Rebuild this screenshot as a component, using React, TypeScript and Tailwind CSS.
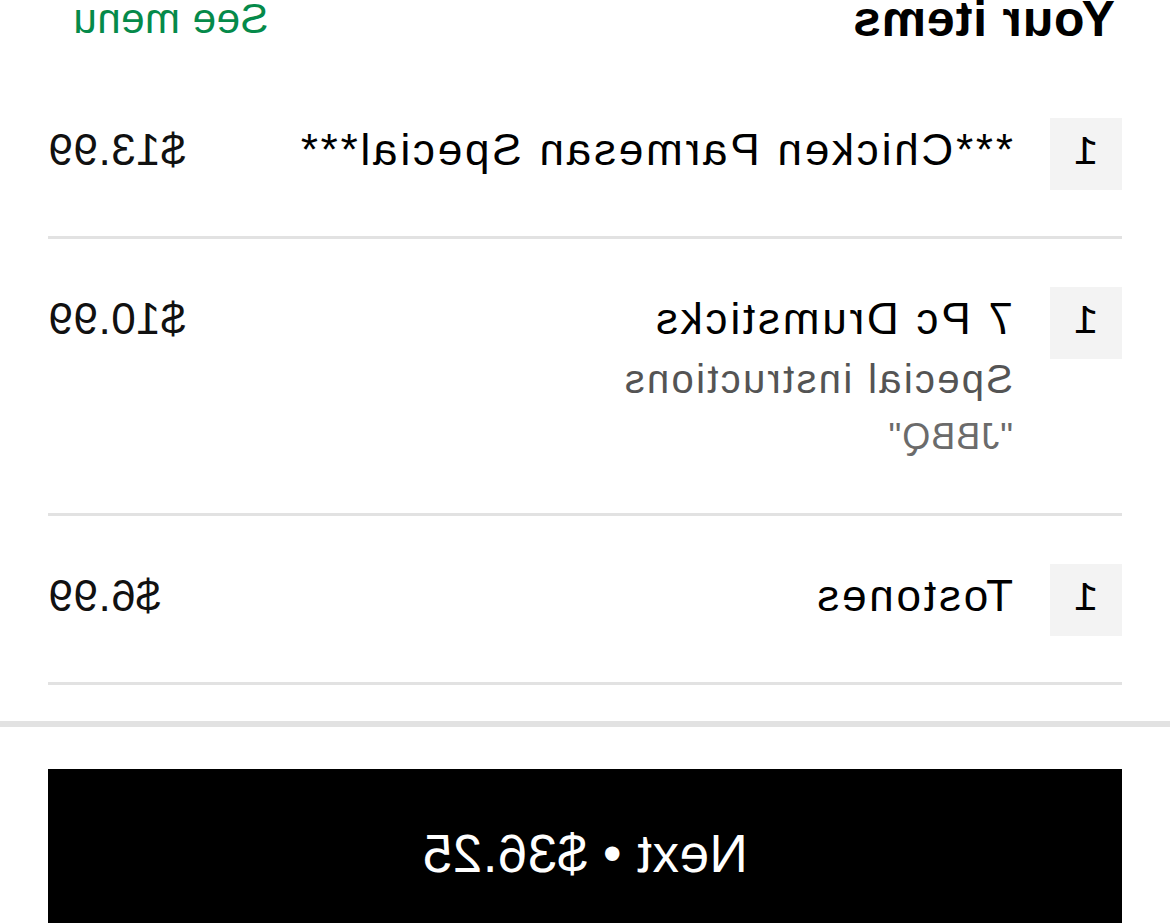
const items = [
  { qty: 1, name: "***Chicken Parmesan Special***", price: "$13.99" },
  {
    qty: 1,
    name: "7 Pc Drumsticks",
    price: "$10.99",
    note: "Special instructions",
    detail: '"JBBQ"',
  },
  { qty: 1, name: "Tostones", price: "$6.99" },
];

type Item = (typeof items)[number] & { note?: string; detail?: string };

const CartRow = ({ item }: { item: Item }) => {
  return (
    <div className="flex items-start pt-[48px] pb-[46px] border-b-[3px] border-[#e2e2e2]">
      {/* quantity */}
      <div className="w-[72px] h-[72px] shrink-0 bg-[#f3f3f3] flex items-center justify-center text-[40px] text-black font-['Liberation_Mono',monospace]">
        {item.qty}
      </div>
      <div className="flex-1 pl-[37px] flex flex-col">
        <span className="text-[44px] leading-[64px] tracking-[2.8px] text-black">
          {item.name}
        </span>
        {item.note && (
          <span className="text-[40px] leading-[56px] tracking-[2.3px] text-[#545454]">
            {item.note}
          </span>
        )}
        {item.detail && (
          <span className="text-[36px] leading-[60px] tracking-[1px] text-[#6b6b6b]">
            {item.detail}
          </span>
        )}
      </div>
      <span className="text-[44px] leading-[64px] tracking-[0.5px] text-[#111]">
        {item.price}
      </span>
    </div>
  );
};

export default function App() {
  return (
    <div className="w-[1170px] h-[923px] overflow-hidden bg-white -scale-x-100 font-['Liberation_Sans',Arial,sans-serif]">
      {/* header */}
      <div className="h-[70px] pl-[55px] pr-[73px] flex justify-between items-start">
        <h2 className="-mt-[6px] text-[50px] leading-[50px] font-bold tracking-[0.8px] text-black">
          Your items
        </h2>
        <span className="mt-[-2px] text-[42px] leading-[42px] tracking-[0.5px] text-[#058a4a]">
          See menu
        </span>
      </div>

      {/* items */}
      <div className="px-[48px]">
        {items.map((item, i) => (
          <CartRow key={i} item={item} />
        ))}
      </div>

      <div className="mt-[36px] h-[6px] bg-[#e2e2e2]"></div>

      {/* checkout */}
      <div className="px-[48px] pt-[42px]">
        <button className="w-full h-[170px] bg-black text-white text-[53px] font-medium tracking-[0.5px] flex items-center justify-center">
          Next • $36.25
        </button>
      </div>
    </div>
  );
}
